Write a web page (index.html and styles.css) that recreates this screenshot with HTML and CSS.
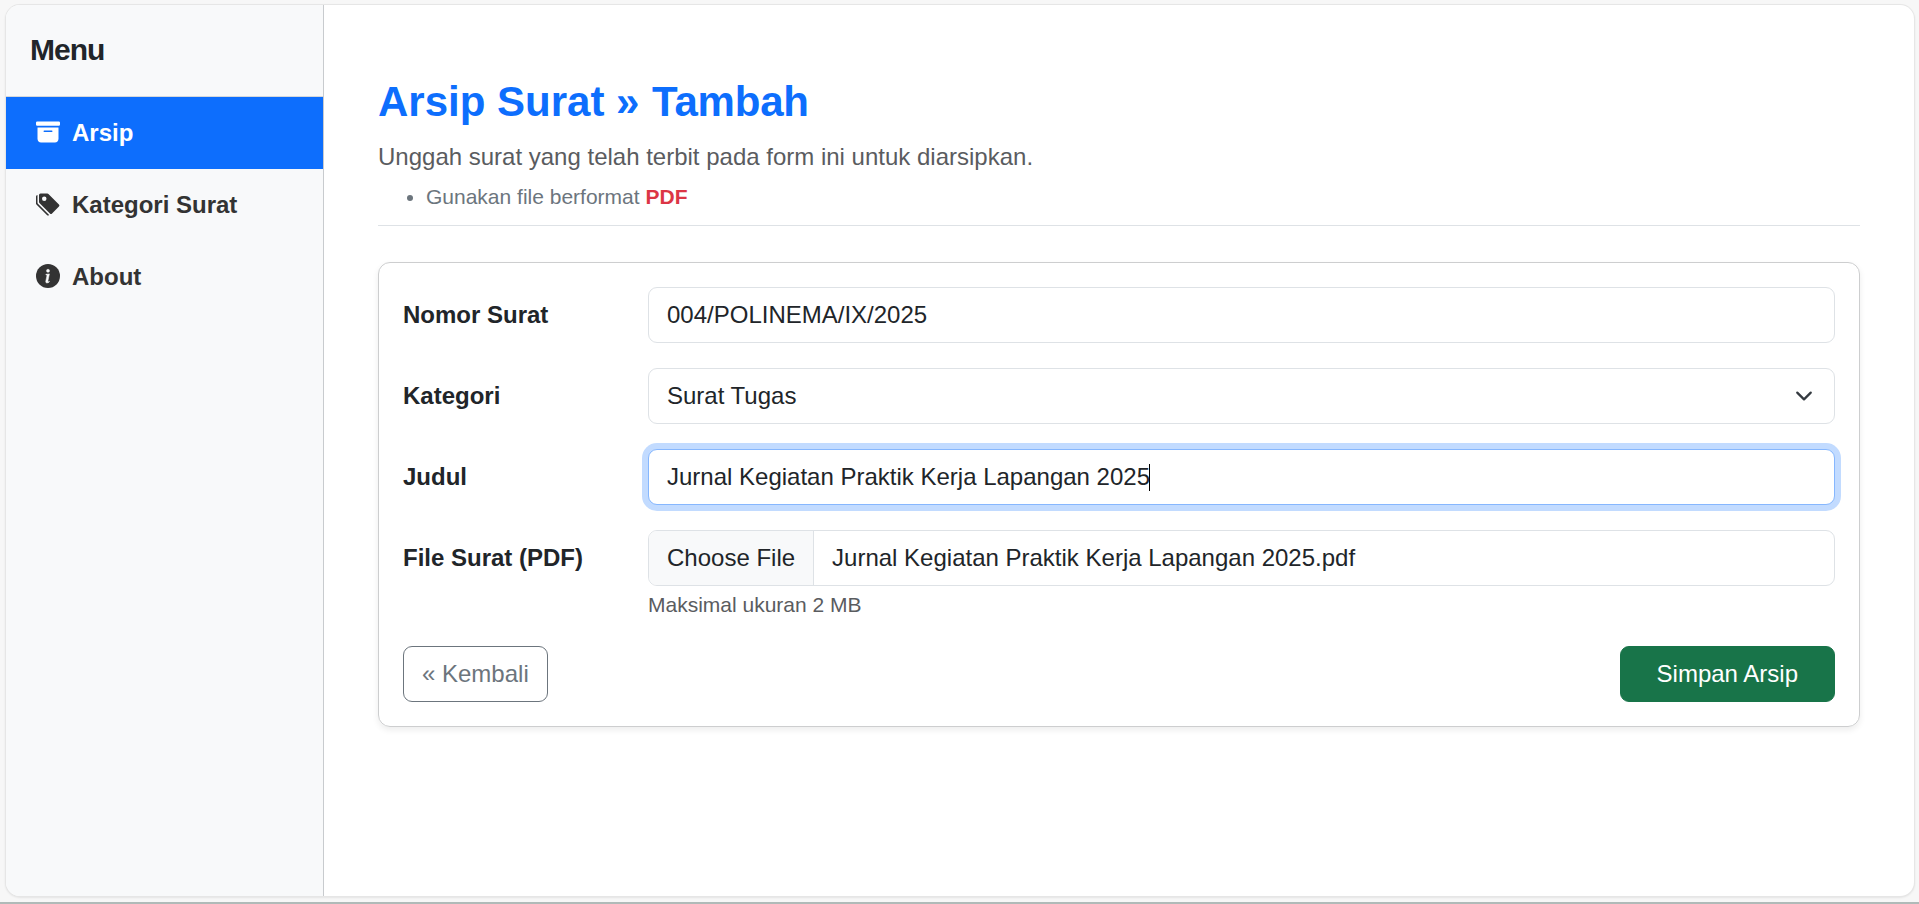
FILE: index.html
```html
<!DOCTYPE html>
<html lang="id">
<head>
<meta charset="utf-8">
<title>Arsip Surat</title>
<link rel="stylesheet" href="styles.css">
</head>
<body>
<div class="window">
  <aside class="sidebar">
    <h5 class="sidebar-title">Menu</h5>
    <nav class="nav">
      <a class="nav-item active">
        <svg class="icon" viewBox="0 0 16 16"><path d="M12.643 15C13.979 15 15 13.845 15 12.5V5H1v7.5C1 13.845 2.021 15 3.357 15zM5.5 7h5a.5.5 0 0 1 0 1h-5a.5.5 0 0 1 0-1M.8 1a.8.8 0 0 0-.8.8V3a.8.8 0 0 0 .8.8h14.4A.8.8 0 0 0 16 3V1.8a.8.8 0 0 0-.8-.8z"/></svg>
        <span>Arsip</span>
      </a>
      <a class="nav-item">
        <svg class="icon" viewBox="0 0 16 16"><path d="M2 2a1 1 0 0 1 1-1h4.586a1 1 0 0 1 .707.293l7 7a1 1 0 0 1 0 1.414l-4.586 4.586a1 1 0 0 1-1.414 0l-7-7A1 1 0 0 1 2 6.586zm3.5 4a1.5 1.5 0 1 0 0-3 1.5 1.5 0 0 0 0 3"/><path d="M1.293 7.793A1 1 0 0 1 1 7.086V2a1 1 0 0 0-1 1v4.586a1 1 0 0 0 .293.707l7 7a1 1 0 0 0 1.414 0l.043-.043z"/></svg>
        <span>Kategori Surat</span>
      </a>
      <a class="nav-item">
        <svg class="icon" viewBox="0 0 16 16"><circle cx="8" cy="8" r="8"/><path class="icon-mark" d="m8.93 6.588-1 4.705c-.07.34.029.533.304.533.194 0 .487-.07.686-.246l-.088.416c-.287.346-.92.598-1.465.598-.703 0-1.002-.422-.808-1.319l.738-3.468c.064-.293.006-.399-.287-.47l-.451-.081.082-.381 2.29-.287zM8 5.5a1 1 0 1 1 0-2 1 1 0 0 1 0 2"/></svg>
        <span>About</span>
      </a>
    </nav>
  </aside>
  <main class="content">
    <header class="page-header">
      <h3 class="title">Arsip Surat » <span class="title-page">Tambah</span></h3>
      <p class="lead">Unggah surat yang telah terbit pada form ini untuk diarsipkan.</p>
      <ul class="notes"><li>Gunakan file berformat <strong>PDF</strong></li></ul>
    </header>
    <form class="card">
      <div class="row">
        <label class="label">Nomor Surat</label>
        <div class="control">004/POLINEMA/IX/2025</div>
      </div>
      <div class="row">
        <label class="label">Kategori</label>
        <div class="control select">
          <span>Surat Tugas</span>
          <svg class="chevron" viewBox="0 0 16 16"><path d="m2 5 6 6 6-6"/></svg>
        </div>
      </div>
      <div class="row">
        <label class="label">Judul</label>
        <div class="control focused">Jurnal Kegiatan Praktik Kerja Lapangan 2025<span class="caret"></span></div>
      </div>
      <div class="row">
        <label class="label">File Surat (PDF)</label>
        <div class="field">
          <div class="control file">
            <span class="file-button">Choose File</span>
            <span class="file-name">Jurnal Kegiatan Praktik Kerja Lapangan 2025.pdf</span>
          </div>
          <div class="hint">Maksimal ukuran 2 MB</div>
        </div>
      </div>
      <div class="actions">
        <a class="btn btn-back">« Kembali</a>
        <a class="btn btn-save">Simpan Arsip</a>
      </div>
    </form>
  </main>
</div>
</body>
</html>
```

FILE: styles.css
```css
* { box-sizing: border-box; }

body {
  margin: 0;
  height: 904px;
  padding: 5px 5px 8px 6px;
  overflow: hidden;
  background: #f7f7f7;
  border-bottom: 2px solid #b0bab8;
  font: 24px/36px "Liberation Sans", Arial, sans-serif;
  color: #212529;
}

.window {
  display: flex;
  height: 891px;
  border-radius: 14px;
  overflow: hidden;
  background: #fff;
  box-shadow: 0 0 0 1px #e6e6e6, 0 1px 2px 1px rgba(0, 0, 0, .08);
}

.sidebar {
  width: 318px;
  flex: none;
  background: #f8f9fa;
  border-right: 1px solid #c8cbce;
}

.sidebar-title {
  margin: 0;
  height: 92px;
  padding: 27px 24px 0;
  border-bottom: 1px solid #d5d8db;
  font-size: 30px;
  line-height: 36px;
  letter-spacing: -1px;
}

.nav-item {
  display: flex;
  align-items: center;
  gap: 12px;
  height: 72px;
  padding: 0 30px;
  font-weight: bold;
  color: #333;
}

.nav-item.active { background: #0d6efd; color: #fff; }

.icon {
  width: 24px;
  height: 24px;
  margin-top: -2px;
  fill: currentColor;
}

.icon-mark {
  fill: #f8f9fa;
  stroke: #f8f9fa;
  stroke-width: .35;
}

.content { flex: 1; padding: 72px 54px 0; }

.page-header {
  height: 149px;
  border-bottom: 1px solid #dee2e6;
}

.title {
  margin: 0;
  font-size: 42px;
  line-height: 50px;
  color: #0d6efd;
}

.title-page { margin-left: 1px; letter-spacing: -.2px; }

.lead { margin: 12px 0 0; line-height: 36px; color: #5a5c5f; }

.notes {
  margin: 6px 0 0;
  padding-left: 48px;
  font-size: 21px;
  line-height: 32px;
  color: #6c757d;
}

.notes strong { color: #dc3545; }

.card {
  display: flex;
  flex-direction: column;
  gap: 25px;
  height: 465px;
  margin-top: 36px;
  padding: 24px;
  border: 1px solid #cdcecf;
  border-radius: 12px;
  box-shadow: 0 3px 6px rgba(0, 0, 0, .075);
}

.row {
  display: grid;
  grid-template-columns: 245px 1fr;
  align-items: start;
}

.label { font-weight: bold; line-height: 56px; }

.control {
  display: flex;
  align-items: center;
  height: 56px;
  padding: 0 18px;
  border: 1px solid #dee2e6;
  border-radius: 9px;
  background: #fff;
}

.select { justify-content: space-between; padding-right: 21px; }

.chevron {
  width: 18px;
  height: 18px;
  fill: none;
  stroke: #343a40;
  stroke-width: 2;
  stroke-linecap: round;
  stroke-linejoin: round;
}

.focused {
  border-color: #86b7fe;
  box-shadow: 0 0 0 6px #c2dbff;
}

.caret { width: 1px; height: 27px; margin-left: -1px; background: #000; }

.file { padding: 0; overflow: hidden; }

.file-button {
  padding: 0 18px;
  border-right: 1px solid #dee2e6;
  background: #f8f9fa;
  line-height: 54px;
}

.file-name { padding-left: 18px; }

.hint {
  height: 35px;
  padding-top: 3px;
  font-size: 21px;
  line-height: 32px;
  color: #5a5c5f;
}

.actions { display: flex; justify-content: space-between; }

.btn {
  height: 56px;
  border: 1px solid;
  border-radius: 9px;
  line-height: 54px;
  text-align: center;
}

.btn-back { padding: 0 18px; border-color: #6c757d; color: #6c757d; }
.btn-save { padding: 0 36px; border-color: #187449; background: #187449; color: #fff; }
```
